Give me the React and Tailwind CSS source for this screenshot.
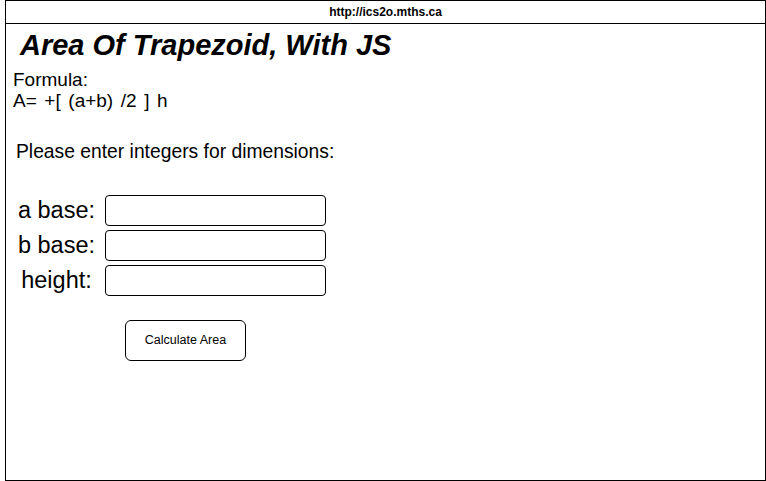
const rows = [
  { id: 'a', label: 'a base:' },
  { id: 'b', label: 'b base:' },
  { id: 'h', label: 'height:' },
];

export default function App() {
  return (
    <div className="w-[766px] h-[481px] bg-white font-['Liberation_Sans',Arial,sans-serif] text-black">
      <div className="ml-[5px] w-[761px] h-[481px] border border-black flex flex-col">
        {/* address bar */}
        <div className="h-[23px] border-b border-black flex items-center justify-center text-[12px] font-bold">
          http://ics2o.mths.ca
        </div>

        <h1 className="mt-[4px] ml-[14px] text-[29px] leading-[34px] font-bold italic">
          Area Of Trapezoid, With JS
        </h1>

        <div className="mt-[7px] ml-[7px] text-[19px] leading-[21px]">
          <p>Formula:</p>
          <p className="[word-spacing:2.3px]">A= +[ (a+b) /2 ] h</p>
        </div>

        <p className="mt-[30px] ml-[10px] text-[19.3px] leading-[21px]">
          Please enter integers for dimensions:
        </p>

        <div className="mt-[33px] flex flex-col gap-[4px]">
          {rows.map((r) => (
            <div key={r.id} className="flex items-center">
              <label htmlFor={r.id} className="w-[89px] ml-[6px] text-center text-[23.5px] leading-[27px]">
                {r.label}
              </label>
              <input
                id={r.id}
                type="text"
                className="ml-[4px] w-[221px] h-[31px] border border-black rounded-[4px] bg-white"
              />
            </div>
          ))}
        </div>

        <button className="mt-[24px] ml-[119px] w-[121px] h-[41px] border border-black rounded-[6px] bg-white text-[12.5px]">
          Calculate Area
        </button>
      </div>
    </div>
  );
}
